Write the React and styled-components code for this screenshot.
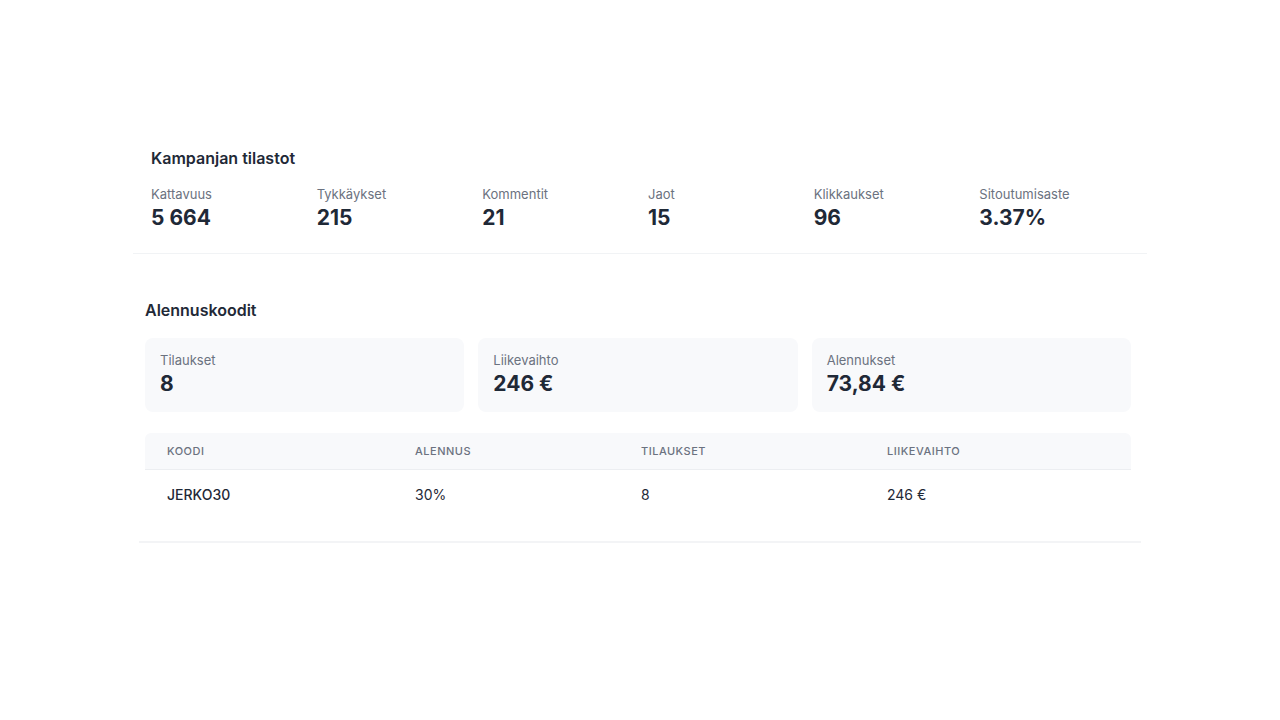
import React from 'react';
import styled, { createGlobalStyle } from 'styled-components';

const GlobalStyle = createGlobalStyle`
  html, body {
    margin: 0;
    padding: 0;
    background: #ffffff;
    font-family: Inter, "Noto Sans", sans-serif;
    color: #1f2937;
  }
`;

const Page = styled.div`
  width: 1280px;
  min-height: 720px;
  padding-top: 146px;
  box-sizing: border-box;
`;

const StatsSection = styled.section`
  margin: 0 133px;
  padding: 0 18px 21px;
  border-bottom: 1px solid #f1f3f5;
`;

const SectionTitle = styled.h2`
  margin: 0;
  font-size: 16px;
  line-height: 24px;
  font-weight: 600;
  color: #1f2937;
`;

const StatsGrid = styled.div`
  display: grid;
  grid-template-columns: repeat(6, 1fr);
  gap: 16px;
  margin-top: 15px;
`;

const Stat = styled.div`
  display: flex;
  flex-direction: column;
`;

const Label = styled.span`
  font-size: 13px;
  line-height: 18px;
  color: #6b7280;
`;

const Value = styled.span`
  font-size: 21px;
  line-height: 28px;
  margin-top: 1px;
  font-weight: 700;
  color: #1f2937;
`;

const CodesSection = styled.section`
  margin: 44px 139px 0;
  padding: 0 10px 23px 6px;
  border-bottom: 2px solid #f3f4f6;
`;

const CardRow = styled.div`
  display: grid;
  grid-template-columns: repeat(3, 1fr);
  gap: 14px;
  margin-top: 16px;
`;

const Card = styled.div`
  background: #f8f9fb;
  border-radius: 8px;
  padding: 13px 15px 16px;
  height: 74px;
  box-sizing: border-box;
  display: flex;
  flex-direction: column;
`;

const Table = styled.div`
  margin-top: 21px;
`;

const TableRow = styled.div`
  display: grid;
  grid-template-columns: 248px 226px 246px 1fr;
  padding: 0 22px;
  align-items: center;
  height: ${p => (p.$head ? '36px' : '48px')};
  background: ${p => (p.$head ? '#f8f9fb' : 'transparent')};
  border-bottom: ${p => (p.$head ? '1px solid #eceef1' : 'none')};
  border-radius: ${p => (p.$head ? '6px 6px 0 0' : '0')};
`;

const HeadCell = styled.span`
  font-size: 11px;
  font-weight: 500;
  letter-spacing: 0.5px;
  text-transform: uppercase;
  color: #6b7280;
`;

const Cell = styled.span`
  font-size: 14px;
  font-weight: ${p => (p.$strong ? 500 : 400)};
  color: #1f2937;
`;

const stats = [
  ['Kattavuus', '5 664'],
  ['Tykkäykset', '215'],
  ['Kommentit', '21'],
  ['Jaot', '15'],
  ['Klikkaukset', '96'],
  ['Sitoutumisaste', '3.37%'],
];

const totals = [
  ['Tilaukset', '8'],
  ['Liikevaihto', '246 €'],
  ['Alennukset', '73,84 €'],
];

const App = () => (
  <Page>
    <GlobalStyle />
    <StatsSection>
      <SectionTitle>Kampanjan tilastot</SectionTitle>
      <StatsGrid>
        {stats.map(([label, value]) => (
          <Stat key={label}>
            <Label>{label}</Label>
            <Value>{value}</Value>
          </Stat>
        ))}
      </StatsGrid>
    </StatsSection>

    <CodesSection>
      <SectionTitle>Alennuskoodit</SectionTitle>
      <CardRow>
        {totals.map(([label, value]) => (
          <Card key={label}>
            <Label>{label}</Label>
            <Value>{value}</Value>
          </Card>
        ))}
      </CardRow>
      <Table>
        <TableRow $head>
          <HeadCell>Koodi</HeadCell>
          <HeadCell>Alennus</HeadCell>
          <HeadCell>Tilaukset</HeadCell>
          <HeadCell>Liikevaihto</HeadCell>
        </TableRow>
        <TableRow>
          <Cell $strong>JERKO30</Cell>
          <Cell>30%</Cell>
          <Cell>8</Cell>
          <Cell>246 €</Cell>
        </TableRow>
      </Table>
    </CodesSection>
  </Page>
);

export default App;
